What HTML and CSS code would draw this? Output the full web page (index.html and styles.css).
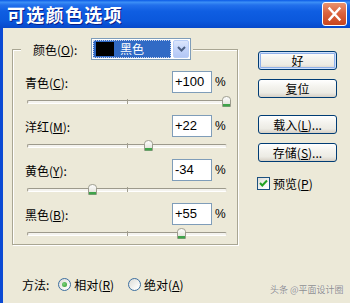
FILE: index.html
```html
<!DOCTYPE html>
<html lang="zh">
<head>
<meta charset="utf-8">
<title>可选颜色选项</title>
<link rel="stylesheet" href="styles.css">
</head>
<body>
<div class="window">
  <div class="titlebar">
    <span class="title">可选颜色选项</span>
    <span class="close">
      <svg width="23" height="22" viewBox="0 0 23 22"><path d="M6.5 5.5 L16.5 16.5 M16.5 5.5 L6.5 16.5" stroke="#fff" stroke-width="2.4" stroke-linecap="square"/></svg>
    </span>
  </div>
  <div class="client">
    <div class="main">
      <fieldset class="group">
        <legend class="legend">
          <span class="legend-inner">
            <span class="legend-label">颜色(<u>O</u>):</span>
            <span class="select">
              <span class="sel-val"><span class="swatch"></span><span class="sel-text">黑色</span></span>
              <span class="sel-btn"><svg width="9" height="6" viewBox="0 0 9 6"><path d="M1 1 L4.5 4.5 L8 1" fill="none" stroke="#4D6185" stroke-width="2"/></svg></span>
            </span>
          </span>
        </legend>

        <div class="row">
          <div class="row-top"><span class="lbl">青色(<u>C</u>):</span><span class="input">+100</span><span class="pct">%</span></div>
          <div class="slider"><div class="track"></div><span class="tick"></span><span class="thumb" style="left:195px"><svg width="9" height="11" viewBox="0 0 9 11"><defs><linearGradient id="tg" x1="0" y1="0" x2="0" y2="1"><stop offset="0" stop-color="#FFFFFF"/><stop offset="1" stop-color="#DCDCD2"/></linearGradient></defs><path d="M0.5 3.5 Q0.5 0.5 4.5 0.5 Q8.5 0.5 8.5 3.5 V10.5 H0.5 Z" fill="url(#tg)" stroke="#9C9C8E"/><rect x="1" y="8" width="7" height="2.5" fill="#3FA34A"/></svg></span></div>
        </div>

        <div class="row">
          <div class="row-top"><span class="lbl">洋红(<u>M</u>):</span><span class="input">+22</span><span class="pct">%</span></div>
          <div class="slider"><div class="track"></div><span class="tick"></span><span class="thumb" style="left:117px"><svg width="9" height="11" viewBox="0 0 9 11"><path d="M0.5 3.5 Q0.5 0.5 4.5 0.5 Q8.5 0.5 8.5 3.5 V10.5 H0.5 Z" fill="url(#tg)" stroke="#9C9C8E"/><rect x="1" y="8" width="7" height="2.5" fill="#3FA34A"/></svg></span></div>
        </div>

        <div class="row">
          <div class="row-top"><span class="lbl">黄色(<u>Y</u>):</span><span class="input">-34</span><span class="pct">%</span></div>
          <div class="slider"><div class="track"></div><span class="tick"></span><span class="thumb" style="left:61px"><svg width="9" height="11" viewBox="0 0 9 11"><path d="M0.5 3.5 Q0.5 0.5 4.5 0.5 Q8.5 0.5 8.5 3.5 V10.5 H0.5 Z" fill="url(#tg)" stroke="#9C9C8E"/><rect x="1" y="8" width="7" height="2.5" fill="#3FA34A"/></svg></span></div>
        </div>

        <div class="row">
          <div class="row-top"><span class="lbl">黑色(<u>B</u>):</span><span class="input">+55</span><span class="pct">%</span></div>
          <div class="slider"><div class="track"></div><span class="tick"></span><span class="thumb" style="left:150px"><svg width="9" height="11" viewBox="0 0 9 11"><path d="M0.5 3.5 Q0.5 0.5 4.5 0.5 Q8.5 0.5 8.5 3.5 V10.5 H0.5 Z" fill="url(#tg)" stroke="#9C9C8E"/><rect x="1" y="8" width="7" height="2.5" fill="#3FA34A"/></svg></span></div>
        </div>
      </fieldset>

      <div class="buttons">
        <span class="btn btn-default">好</span>
        <span class="btn">复位</span>
        <span class="btn btn-sep">载入(<u>L</u>)...</span>
        <span class="btn">存储(<u>S</u>)...</span>
        <span class="check-row">
          <span class="checkbox"><svg width="11" height="11" viewBox="0 0 11 11"><path d="M2 5 L4.3 7.5 L9 2.5" fill="none" stroke="#21A121" stroke-width="2"/></svg></span>
          <span class="check-label">预览(<u>P</u>)</span>
        </span>
      </div>
    </div>

    <div class="method">
      <span class="method-label">方法:</span>
      <span class="radio-opt"><span class="radio radio-on"><span class="dot"></span></span><span>相对(<u>R</u>)</span></span>
      <span class="radio-opt radio-opt2"><span class="radio"></span><span>绝对(<u>A</u>)</span></span>
    </div>
  </div>
  <div class="watermark">头条 @平面设计圈</div>
</div>
</body>
</html>
```

FILE: styles.css
```css
* { box-sizing: border-box; }
html, body { margin: 0; padding: 0; }
body {
  width: 350px;
  height: 303px;
  overflow: hidden;
  background: #ECE9D8;
  font-family: "Noto Sans CJK SC", "Liberation Sans", sans-serif;
  font-size: 12px;
  color: #000;
}
u { text-decoration: underline; text-underline-offset: 1px; }

.window {
  position: relative;
  width: 350px;
  height: 303px;
  background: #ECE9D8;
}

.titlebar {
  height: 28px;
  display: flex;
  align-items: center;
  padding-left: 7px;
  background: linear-gradient(to bottom, #0A5AE6 0%, #3C8FF6 8%, #2270EC 18%, #0F5EE2 40%, #0B58DC 75%, #0749CB 100%);
}
.title {
  color: #fff;
  font-weight: 700;
  font-size: 18px;
  letter-spacing: 1.3px;
  line-height: 1;
  text-shadow: 1px 1px 0 #0A1F8A;
}
.close {
  margin-left: auto;
  margin-right: 3px;
  width: 25px;
  height: 24px;
  border: 1px solid #fff;
  border-radius: 3px;
  background: linear-gradient(to bottom, #E8936F 0%, #DB6440 45%, #C8451E 100%);
  display: flex;
  align-items: center;
  justify-content: center;
}

.client {
  height: 275px;
  border-left: 3px solid #0B4AD4;
  padding: 10px 0 0 9px;
}

.main {
  display: flex;
  align-items: flex-start;
  gap: 20px;
}

.group {
  margin: 0;
  width: 226px;
  min-inline-size: 0;
  border: 1px solid #A9A693;
  box-shadow: 1px 1px 0 #FFFFFF, inset 1px 1px 0 #FFFFFF;
  padding: 11px 10px 7px 12px;
}
.legend {
  margin-left: -4px;
  padding: 0 2px 0 12px;
  background: #ECE9D8;
}
.legend-inner {
  display: flex;
  align-items: center;
  height: 22px;
}
.legend-label { width: 58px; }
.select {
  width: 100px;
  height: 22px;
  border: 1px solid #7F9DB9;
  background: #fff;
  padding: 1px;
  display: flex;
  gap: 2px;
}
.sel-val {
  width: 80px;
  background: #316AC5;
  outline: 1px dotted #C8D4EE;
  outline-offset: -1px;
  display: flex;
  align-items: center;
  padding-left: 3px;
}
.swatch {
  width: 18px;
  height: 14px;
  background: #000;
}
.sel-text {
  color: #fff;
  margin-left: 6px;
  line-height: 1;
}
.sel-btn {
  width: 16px;
  border: 1px solid #B8CDF6;
  border-radius: 2px;
  background: linear-gradient(to bottom, #DCE6FC 0%, #C3D4FA 50%, #B3C7F5 100%);
  display: flex;
  align-items: center;
  justify-content: center;
}

.row { margin-bottom: 10px; }
.row:last-of-type { margin-bottom: 0; }
.row-top {
  display: grid;
  grid-template-columns: 1fr 40px 12px;
  column-gap: 3px;
  align-items: center;
  height: 22px;
}
.input {
  height: 22px;
  border: 1px solid #7F9DB9;
  background: #fff;
  padding-left: 2px;
  font-family: "Liberation Sans", sans-serif;
  font-size: 13px;
  line-height: 20px;
}
.pct {
  font-family: "Liberation Sans", sans-serif;
  font-size: 12px;
}

.slider {
  position: relative;
  height: 12px;
  width: 200px;
  margin-left: 2px;
  padding-top: 7px;
}
.track {
  height: 4px;
  border: 1px solid;
  border-color: #9D9A8C #E2E0D4 #FFFFFF #9D9A8C;
  border-radius: 2px;
  background: #F4F3EE;
}
.tick {
  position: absolute;
  left: 100px;
  top: 6px;
  width: 1px;
  height: 5px;
  background: #A19E8F;
}
.thumb {
  position: absolute;
  top: 3px;
  width: 9px;
  height: 11px;
  display: block;
}
.thumb svg { display: block; }

.buttons {
  width: 79px;
  margin-top: 13px;
  display: flex;
  flex-direction: column;
}
.btn {
  height: 19px;
  margin-bottom: 9px;
  border: 1px solid #003C74;
  border-radius: 3px;
  background: linear-gradient(to bottom, #FFFFFF 0%, #F4F3EE 40%, #ECEBE4 75%, #D6D0C5 100%);
  display: flex;
  align-items: center;
  justify-content: center;
  line-height: 1;
}
.btn-default {
  box-shadow: inset 0 0 0 1px #CEE0FB, inset 0 0 0 2px #8FB0EA;
}
.btn-sep { margin-top: 8px; }
.check-row {
  margin-top: 5px;
  margin-left: -1px;
  display: flex;
  align-items: center;
  gap: 3px;
  height: 14px;
}
.checkbox {
  width: 13px;
  height: 13px;
  border: 1px solid #1C5180;
  background: linear-gradient(135deg, #DCDCD7 0%, #F8F8F6 70%, #FFFFFF 100%);
  display: flex;
  align-items: center;
  justify-content: center;
}
.checkbox svg { display: block; }

.method {
  margin-top: 31px;
  margin-left: 10px;
  height: 16px;
  display: flex;
  align-items: center;
}
.radio-opt {
  display: flex;
  align-items: center;
  gap: 3px;
  margin-left: 9px;
}
.radio-opt2 { margin-left: 14px; }
.radio {
  width: 13px;
  height: 13px;
  border-radius: 50%;
  border: 1px solid #3C6FA0;
  background: linear-gradient(135deg, #DCDCD7 0%, #F8F8F6 70%, #FFFFFF 100%);
  display: flex;
  align-items: center;
  justify-content: center;
}
.dot {
  width: 5px;
  height: 5px;
  border-radius: 50%;
  background: radial-gradient(circle at 40% 40%, #7BD17B 0%, #2E9A2E 100%);
}

.watermark {
  position: absolute;
  left: 270px;
  top: 285px;
  font-size: 9px;
  line-height: 1;
  color: #8E8E8E;
  text-shadow: 0 0 1px #FFFFFF;
  white-space: nowrap;
}
```
